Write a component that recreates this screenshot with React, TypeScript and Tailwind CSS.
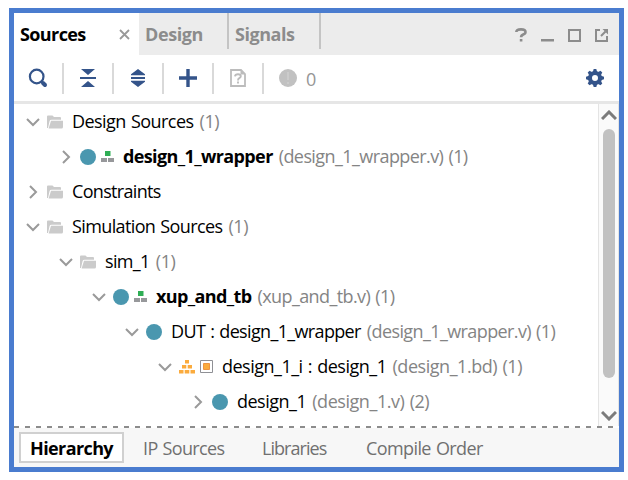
import type { ReactNode } from 'react';

const Chevron = ({ open }: { open: boolean }) => (
  <svg width="14" height="14" viewBox="0 0 14 14" fill="none" stroke="#9a9a9a" strokeWidth="2" className="shrink-0">
    <path d={open ? 'M1 4L7 10L13 4' : 'M4 1L10 7L4 13'} />
  </svg>
);

const Folder = () => (
  <svg width="16" height="14" viewBox="0 0 16 14" className="shrink-0">
    <path d="M0 13V1.5Q0 .5 1 .5H5.5L7 2H13Q14 2 14 3V4.8H4.5Q3 4.8 2.6 6L1 13Z" fill="#cbcbcb" />
    <path d="M4 5.8H16V12Q16 13.5 14.5 13.5H1.6Z" fill="#cbcbcb" />
  </svg>
);

const Dot = () => <span className="size-4 shrink-0 rounded-full bg-[#4a97af]" />;

const Modules = () => (
  <svg width="13" height="12" viewBox="0 0 13 12" className="ml-[5px] shrink-0">
    <path d="M4 0H9.5V5H4Z" fill="#2fae55" />
    <path d="M0 7H6V11H0ZM7 7H13V11H7Z" fill="#97989b" />
  </svg>
);

const Block = () => (
  <>
    <svg width="16" height="14" viewBox="0 0 16 14" fill="#fbab3d" className="shrink-0">
      <path d="M6 0H10V3.5H6ZM3 5H7.3V8.5H3ZM8.7 5H13V8.5H8.7ZM0 10H4.5V13.5H0ZM5.7 10H10.3V13.5H5.7ZM11.5 10H16V13.5H11.5Z" />
    </svg>
    <svg width="13" height="13" viewBox="0 0 13 13" className="ml-[5px] shrink-0">
      <path d="M.5.5H12.5V12.5H.5Z" fill="#fff" stroke="#8f9095" />
      <path d="M3.5 3.5H9.5V9.5H3.5Z" fill="#fbab3d" stroke="#ee9440" />
    </svg>
  </>
);

type RowProps = {
  pad: string;
  open?: boolean;
  icon: ReactNode;
  name: string;
  nameClass?: string;
  note?: string;
  noteClass?: string;
};

const Row = ({ pad, open = false, icon, name, nameClass = '', note, noteClass = '' }: RowProps) => (
  <div className={`flex h-[35px] items-center whitespace-nowrap [word-spacing:1px] ${pad}`}>
    <Chevron open={open} />
    <span className="ml-[7px] flex items-center">{icon}</span>
    <span className={`ml-[9px] pb-0.5 text-black ${nameClass}`}>{name}</span>
    {note && <span className={`ml-1.5 pb-0.5 text-[#848484] ${noteClass}`}>{note}</span>}
  </div>
);

const Divider = () => <span className="h-[31px] w-0.5 shrink-0 bg-[#d9d9d9]" />;

const Tool = ({ children }: { children: ReactNode }) => (
  <span className="flex w-12 shrink-0 justify-center">{children}</span>
);

const gearTeeth = [0, 45, 90, 135, 180, 225, 270, 315];

export default function App() {
  return (
    <div className="h-[480px] w-[628px] bg-white pl-[9px] pt-2 font-['Open_Sans','Noto_Sans',sans-serif] text-[18px] leading-6">
      <div className="flex h-[464px] w-[615px] flex-col border-[5px] border-[#4a7ccf] bg-white">
        <div className="flex h-[42px] shrink-0 bg-[#ececec] font-bold text-[#8c8c8c]">
          <div className="flex w-[125px] items-center bg-white pl-1.5 text-black">
            <span className="w-[99px] tracking-[-0.6px]">Sources</span>
            <svg width="11" height="11" viewBox="0 0 11 11" stroke="#999" strokeWidth="1.8">
              <path d="M1 1L10 10M10 1L1 10" />
            </svg>
          </div>
          <div className="flex h-9 w-[90px] border-r-2 border-[#c4c4c4] pl-1.5 pt-[9px]">
            <span className="tracking-[-0.4px]">Design</span>
          </div>
          <div className="flex h-9 w-[92px] border-r-2 border-[#c4c4c4] pl-1.5 pt-[9px]">
            <span className="tracking-[-0.45px]">Signals</span>
          </div>
          <div className="ml-auto flex items-center gap-3.5 pr-[11px] pt-0.5">
            <svg width="12" height="14" viewBox="0 0 12 14" fill="none" stroke="#8c8c8c" strokeWidth="2.6">
              <path d="M1.3 4Q1.5 1.4 6 1.4Q10.5 1.4 10.5 4Q10.5 5.6 8.2 6.5Q6.1 7.3 6.1 9.3M6.1 10.9V13.5" />
            </svg>
            <svg width="13" height="14" viewBox="0 0 13 14"><path d="M0 11H13V13.5H0Z" fill="#8c8c8c" /></svg>
            <span className="size-[13px] border-2 border-[#8c8c8c]" />
            <svg width="13" height="13" viewBox="0 0 13 13" fill="none" stroke="#8c8c8c" strokeWidth="2">
              <path d="M5 1H1V12H12V7" />
              <path d="M6 7L10.5 2.5" />
              <path d="M7.5 0H13V5.5Z" fill="#8c8c8c" stroke="none" />
            </svg>
          </div>
        </div>

        <div className="flex h-[46px] shrink-0 items-center">
          <Tool>
            <svg width="20" height="20" viewBox="0 0 20 20" fill="none" stroke="#34548a">
              <circle cx="8.7" cy="8.5" r="6.8" strokeWidth="2.2" />
              <path d="M13 13L14.5 14.5" strokeWidth="2" />
              <path d="M15 15L17 17" strokeWidth="4" strokeLinecap="round" />
            </svg>
          </Tool>
          <Divider />
          <Tool>
            <svg width="16" height="18" viewBox="0 0 16 18" fill="#34548a">
              <path d="M1 0H15L8 6ZM0 8H16V10H0ZM8 12L15 18H1Z" />
            </svg>
          </Tool>
          <Divider />
          <Tool>
            <svg width="16" height="18" viewBox="0 0 16 18" fill="#34548a">
              <path d="M8 0L15 5.2V6.2H1V5.2ZM1 8H15V10H1ZM1 11.8H15V12.8L8 18L1 12.8Z" />
            </svg>
          </Tool>
          <Divider />
          <Tool>
            <svg width="18" height="18" viewBox="0 0 18 18" stroke="#34548a" strokeWidth="3.4">
              <path d="M9 0V18M0 9H18" />
            </svg>
          </Tool>
          <Divider />
          <Tool>
            <svg width="16" height="18" viewBox="0 0 16 18" fill="none" stroke="#bcbcbc">
              <path d="M1 1H11L15 5V17H1Z" strokeWidth="1.8" />
              <path d="M10.5 1V5.5H15Z" fill="#bcbcbc" stroke="none" />
              <path d="M5 7.4Q5.2 5.3 8 5.3Q10.8 5.3 10.8 7.3Q10.8 8.4 9.3 9.2Q8 9.9 8 11.4M8 12.5V14.5" strokeWidth="1.9" />
            </svg>
          </Tool>
          <Divider />
          <svg width="18" height="18" viewBox="0 0 18 18" className="ml-[15px]">
            <circle cx="9" cy="9" r="9" fill="#c1c1c1" />
            <path d="M9 3V11M9 13V15" stroke="#cbcbcb" strokeWidth="2" />
          </svg>
          <span className="ml-[9px] pt-px text-[#969696]">0</span>
          <svg width="18" height="18" viewBox="-9 -9 18 18" className="ml-auto mr-[15px]">
            {gearTeeth.map((angle) => (
              <path key={angle} d="M-2.2 -6L-1.3 -9H1.3L2.2 -6Z" fill="#34548a" transform={`rotate(${angle})`} />
            ))}
            <circle r="5" fill="none" stroke="#34548a" strokeWidth="4" />
          </svg>
        </div>
        <div className="h-[3px] shrink-0 bg-[#e6e6e6]" />

        <div className="flex h-[322px] shrink-0">
          <div className="flex w-[584px] flex-col">
            <Row pad="pl-3" open icon={<Folder />} name="Design Sources" nameClass="tracking-[-0.55px]" note="(1)" noteClass="tracking-[-0.4px]" />
            <Row pad="pl-[45px]" icon={<><Dot /><Modules /></>} name="design_1_wrapper" nameClass="font-bold tracking-[-0.62px]" note="(design_1_wrapper.v) (1)" noteClass="tracking-[-0.58px]" />
            <Row pad="pl-3" icon={<Folder />} name="Constraints" nameClass="tracking-[-0.67px]" />
            <Row pad="pl-3" open icon={<Folder />} name="Simulation Sources" nameClass="tracking-[-0.62px]" note="(1)" noteClass="tracking-[-0.4px]" />
            <Row pad="pl-[45px]" open icon={<Folder />} name="sim_1" nameClass="tracking-[-0.65px]" note="(1)" noteClass="tracking-[-0.4px]" />
            <Row pad="pl-[78px]" open icon={<><Dot /><Modules /></>} name="xup_and_tb" nameClass="font-bold tracking-[-0.62px]" note="(xup_and_tb.v) (1)" noteClass="tracking-[-0.6px]" />
            <Row pad="pl-[111px]" open icon={<Dot />} name="DUT : design_1_wrapper" nameClass="tracking-[-0.65px]" note="(design_1_wrapper.v) (1)" noteClass="tracking-[-0.6px]" />
            <Row pad="pl-36" open icon={<Block />} name="design_1_i : design_1" nameClass="tracking-[-0.5px]" note="(design_1.bd) (1)" noteClass="tracking-[-0.45px]" />
            <Row pad="pl-[177px]" icon={<Dot />} name="design_1" nameClass="tracking-[-0.5px]" note="(design_1.v) (2)" noteClass="tracking-[-0.45px]" />
          </div>
          <div className="flex w-[21px] flex-col items-center border-x border-[#e4e4e4] bg-[#fafafa] pt-1.5">
            <svg width="16" height="10" viewBox="0 0 16 10" fill="none" stroke="#7b7b7b" strokeWidth="3">
              <path d="M1 9L8 2L15 9" />
            </svg>
            <div className="mt-[9px] h-[249px] w-3 rounded-full bg-[#c1c1c1]" />
            <svg width="16" height="10" viewBox="0 0 16 10" fill="none" stroke="#7b7b7b" strokeWidth="3" className="mt-[33px]">
              <path d="M1 1L8 8L15 1" />
            </svg>
          </div>
        </div>

        <div className="h-0.5 shrink-0 bg-[repeating-linear-gradient(90deg,#8c8c8c_0px,#8c8c8c_5px,#fff_5px,#fff_11px)]" />
        <div className="flex h-[39px] shrink-0 bg-[#f7f7f7] text-[#707070] [word-spacing:1px]">
          <div className="ml-[5px] mt-1 flex h-[31px] w-[105px] items-center justify-center border-2 border-[#d0d0d0] bg-white font-bold text-black">
            <span className="tracking-[-0.6px]">Hierarchy</span>
          </div>
          <span className="w-[120px] pl-[19px] pt-2 tracking-[-0.65px]">IP Sources</span>
          <span className="w-[104px] pl-[18px] pt-2 tracking-[-0.95px]">Libraries</span>
          <span className="pl-[18px] pt-2 tracking-[-0.6px]">Compile Order</span>
        </div>
      </div>
    </div>
  );
}
